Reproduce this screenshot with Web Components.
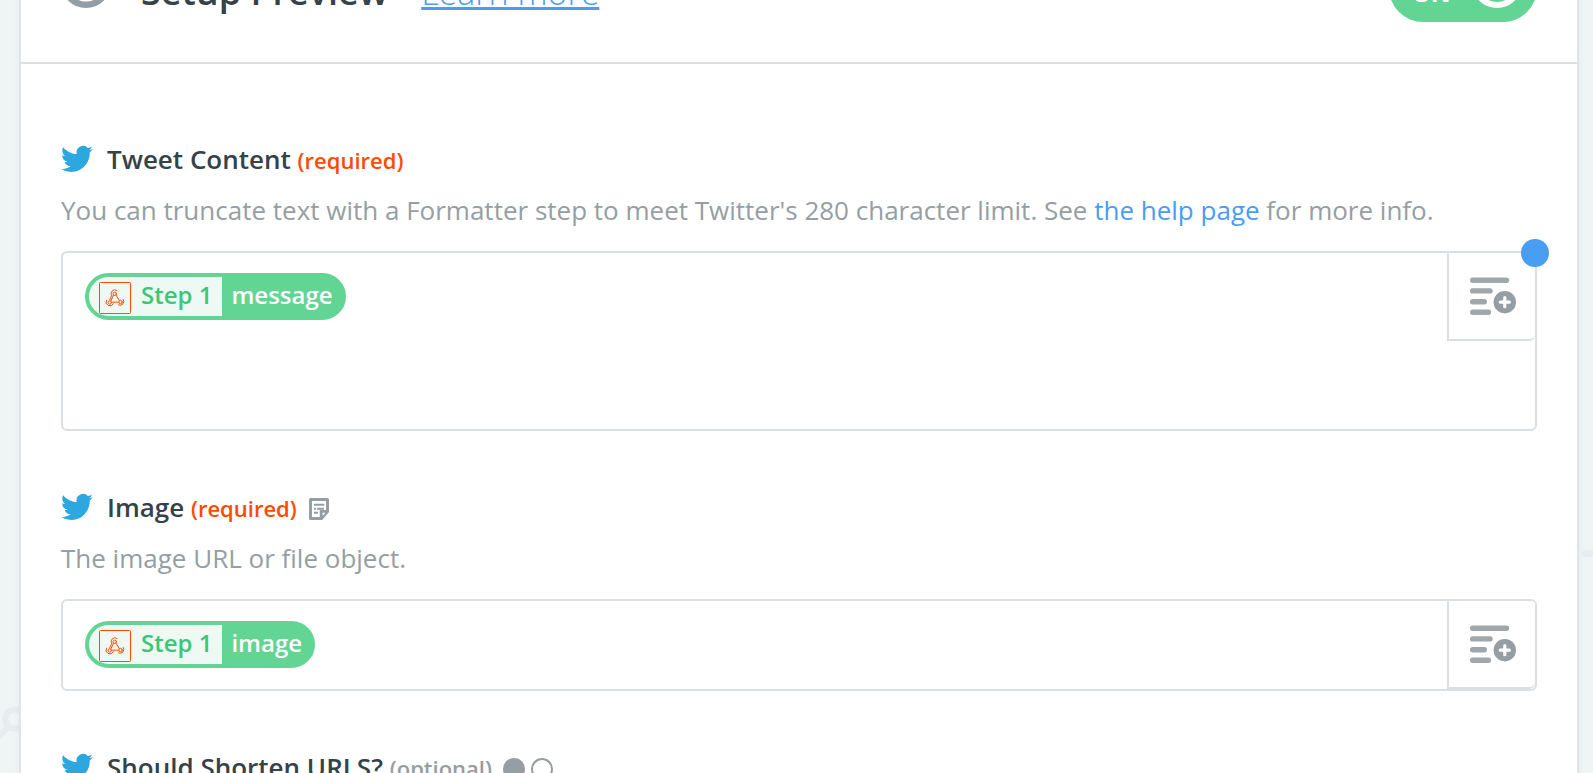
<!DOCTYPE html>
<html lang="en">
<head>
<meta charset="utf-8">
<title>Setup Preview</title>
<style>
  html, body { margin: 0; height: 100%; }
  body {
    overflow: hidden;
    background: #eff4f5;
    color: #354249;
    font-family: "Open Sans", "Noto Sans", sans-serif;
    font-size: 26px;
    --grey: #959ea2;
    --line: #d9dfe2;
    --orange: #ff4a00;
    --green: #62d594;
    --blue: #499df3;
  }
</style>
</head>
<body>
<setup-page>
  <setup-header slot="header" heading="Setup Preview" link="Learn more"></setup-header>
  <form-field label="Tweet Content" note="required">
    <span slot="help">You can truncate text with a Formatter step to meet Twitter's 280 character limit. See <help-link>the help page</help-link> for more info.</span>
    <token-input name="Tweet Content" size="large" alert><step-token step="Step 1">message</step-token></token-input>
  </form-field>
  <form-field label="Image" note="required" kind="file">
    <span slot="help">The image URL or file object.</span>
    <token-input name="Image"><step-token step="Step 1">image</step-token></token-input>
  </form-field>
  <form-field label="Should Shorten URLS?" note="optional" kind="boolean"></form-field>
</setup-page>

<script>
const define = (name, render) => customElements.define(name, class extends HTMLElement {
  constructor() {
    super();
    this.attachShadow({ mode: 'open' });
  }
  connectedCallback() {
    this.shadowRoot.innerHTML = render(this);
  }
});

define('setup-page', () => `
<style>
  :host { display: block; position: relative; height: 100vh; overflow: hidden; }
  .decor { position: absolute; }
  .link { left: 0; bottom: 28px; }
  .bar { right: 0; top: 550px; }
  main {
    position: relative; min-height: 100vh; margin: 0 14px 0 19px; box-sizing: border-box;
    border: solid #dfe4e7; border-width: 0 2px; background: #fff;
    box-shadow: 0 0 6px rgba(60, 80, 90, .06);
  }
  /* the panel is scrolled so that only the foot of its header shows */
  ::slotted(setup-header) { margin-top: -96px; }
  .fields { display: flex; flex-direction: column; gap: 60px; padding: 79px 40px 0; }
</style>
<svg class="decor link" width="30" height="42" fill="none" stroke="#e8ecef" stroke-width="6"><circle cx="15" cy="16" r="9.6"/><path d="M9 23-4 36"/></svg>
<svg class="decor bar" width="11" height="7"><rect width="24" height="7" rx="3.5" fill="#e8ecef"/></svg>
<main><slot name="header"></slot><div class="fields"><slot></slot></div></main>`);

define('setup-header', el => `
<style>
  :host { display: block; }
  header { display: flex; align-items: center; height: 158px; padding: 0 40px; border-bottom: 2px solid var(--line); }
  .text { display: flex; align-items: baseline; gap: 33px; flex: 1; margin-left: 30px; padding-top: 18px; }
  h1 { margin: 0; font-size: 36px; line-height: 44px; font-weight: 600; }
  a { color: var(--blue); font-size: 34px; line-height: 44px; font-weight: 300; text-decoration-thickness: 3px; text-underline-offset: 2px; text-decoration-skip-ink: none; }
  button {
    display: flex; align-items: center; justify-content: space-between; width: 148px; height: 78px;
    padding: 0 15px 0 23px; border: 0; border-radius: 34px; background: var(--green);
    color: #fff; font: 700 24px/32px "Open Sans", sans-serif;
  }
  button span { padding-top: 20px; }
</style>
<header>
  <svg width="50" height="50" aria-hidden="true"><circle cx="25" cy="25" r="21.8" fill="none" stroke="#959ea2" stroke-width="6.400"/></svg>
  <div class="text"><h1>${el.getAttribute('heading')}</h1><a href="#learn">${el.getAttribute('link')}</a></div>
  <button type="button" role="switch" aria-checked="true"><span>ON</span>
    <svg width="50" height="50" aria-hidden="true"><circle cx="25" cy="25" r="22" fill="none" stroke="#fff" stroke-width="6"/></svg>
  </button>
</header>`);

const kindIcons = {
  file: `<svg width="20" height="22" viewBox="0 0 20 22" fill="none" stroke="#959ea2" aria-hidden="true">
    <path d="M1.500 1.500h17v12l-6 7h-11z" stroke-width="3" stroke-linejoin="round"/>
    <path d="M5 6.700h10.300M5 10.700h2M8 10.700h7M5 14.800h4" stroke-width="2"/>
    <path d="M11.500 20.500v-7.800h7.500z" fill="#959ea2" stroke-width="1.500" stroke-linejoin="round"/><path d="M13.600 14.700h2.800l-2.800 3.300z" fill="#fff" stroke="none"/></svg>`,
  boolean: `<svg width="50" height="22" viewBox="0 0 50 22" aria-hidden="true"><circle cx="11" cy="11" r="11" fill="#959ea2"/><circle cx="39" cy="11" r="10" fill="none" stroke="#959ea2" stroke-width="2"/></svg>`
};

define('form-field', el => {
  const note = el.getAttribute('note');
  return `
<style>
  :host { display: block; }
  .label { display: flex; align-items: center; height: 32px; margin-bottom: 18px; }
  .bird { margin-right: 14px; }
  h2 { margin: 0; font-size: 26px; line-height: 32px; font-weight: 600; white-space: nowrap; }
  small { font-size: 22px; line-height: 32px; color: var(--grey); }
  small.required { color: var(--orange); }
  .kind { display: flex; margin-left: 12px; padding-top: 4px; }
  .boolean { margin-left: 11px; }
  .help { display: block; margin-bottom: 24px; line-height: 34px; color: var(--grey); }
</style>
<div class="label">
  <svg class="bird" width="32" height="32" viewBox="0 0 24 24" aria-hidden="true"><path fill="#2ca7e0" d="M23.953 4.57a10 10 0 01-2.825.775 4.958 4.958 0 002.163-2.723c-.951.555-2.005.959-3.127 1.184a4.92 4.92 0 00-8.384 4.482C7.69 8.095 4.067 6.13 1.64 3.162a4.822 4.822 0 00-.666 2.475c0 1.71.87 3.213 2.188 4.096a4.904 4.904 0 01-2.228-.616v.06a4.923 4.923 0 003.946 4.827 4.996 4.996 0 01-2.212.085 4.936 4.936 0 004.604 3.417 9.867 9.867 0 01-6.102 2.105c-.39 0-.779-.023-1.17-.067a13.995 13.995 0 007.557 2.209c9.053 0 13.998-7.496 13.998-13.985 0-.21 0-.42-.015-.63A9.935 9.935 0 0024 4.59z"/></svg>
  <h2>${el.getAttribute('label')} <small class="${note}">(${note})</small></h2>
  ${el.hasAttribute('kind') ? `<span class="kind ${el.getAttribute('kind')}">${kindIcons[el.getAttribute('kind')]}</span>` : ''}
</div>
<div class="help"><slot name="help"></slot></div>
<slot></slot>`;
});

define('help-link', () => `
<style>a { color: var(--blue); text-decoration: none; }</style><a href="#help"><slot></slot></a>`);

define('token-input', el => `
<style>
  :host { display: flex; position: relative; border: 2px solid var(--line); border-radius: 6px; min-height: 88px; background: #fff; }
  :host([size=large]) { min-height: 176px; }
  .box { flex: 1; padding: 20px 22px; outline: none; }
  button {
    display: grid; place-items: center; align-self: flex-start; box-sizing: border-box; width: 88px; height: 88px;
    padding: 0 0 0 2px; background: #fff; border: solid var(--line); border-width: 0 0 2px 2px; border-radius: 0 4px 6px 0;
  }
  .dot { position: absolute; top: -14px; right: -14px; width: 28px; height: 28px; border-radius: 50%; background: var(--blue); }
</style>
<div class="box" role="textbox" tabindex="0" aria-label="${el.getAttribute('name')}"><slot></slot></div>
<button type="button" aria-label="Insert a field">
  <svg width="46" height="38" viewBox="0 0 46 38" aria-hidden="true">
    <g stroke="#9fa7aa" stroke-width="5.400" stroke-linecap="round"><path d="M2.700 3.200h33.800M2.700 13.900h17.300M2.700 24.700h11.600M2.700 35.200h15.700"/></g>
    <circle cx="34.800" cy="25.200" r="11.200" fill="#959ea2"/><path d="M30.300 25.200h9M34.800 20.700v9" stroke="#fff" stroke-width="3.200" stroke-linecap="round"/>
  </svg>
</button>
${el.hasAttribute('alert') ? '<span class="dot"></span>' : ''}`);

define('step-token', el => `
<style>
  :host {
    display: inline-flex; box-sizing: border-box; vertical-align: top; height: 47px; overflow: hidden;
    border: 4px solid var(--green); border-radius: 24px; background: var(--green);
    color: #fff; font-size: 24px; font-weight: 600; line-height: 35px;
  }
  .step { display: flex; gap: 10px; padding: 0 10px; background: #eef9f4; color: #3cc677; }
  .step svg { margin-top: 5px; }
  .name { padding: 0 9px; }
</style>
<span class="step">
  <svg width="32" height="32" viewBox="0 0 32 32" fill="none" stroke="#ff4a00" aria-hidden="true">
    <rect x=".5" y=".5" width="31" height="31" rx="1"/>
    <g stroke-linecap="round" stroke-linejoin="round">
      <circle cx="15.700" cy="11.800" r="1.700"/><circle cx="10.800" cy="20.500" r="1.700"/><circle cx="21.500" cy="20" r="1.700"/>
      <path d="M18 8.400a3.800 3.800 0 0 0-5.300 5.200l-2 4.200M17 13.200l3.200 5.200M14.500 13.200l-2.600 5.600"/>
      <path d="M7.400 18.200a3.800 3.800 0 0 0 6.900 3.600M12.700 20.200h6.600"/>
      <path d="M19.600 23a3.800 3.800 0 0 0 4.600-5.600"/>
    </g>
  </svg>
  <span>${el.getAttribute('step')}</span>
</span>
<span class="name"><slot></slot></span>`);
</script>
</body>
</html>
